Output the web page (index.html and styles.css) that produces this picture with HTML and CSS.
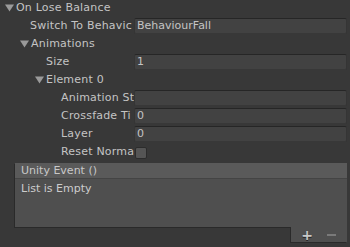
FILE: index.html
```html
<!DOCTYPE html>
<html>
<head>
<meta charset="utf-8">
<link rel="stylesheet" href="styles.css">
</head>
<body>
<div class="inspector">
  <div class="row">
    <div class="label fold lv0"><svg class="tri" width="9" height="8" viewBox="0 0 9 8"><path d="M0 0.5 H9 L4.5 7.5 Z"/></svg>On Lose Balance</div>
  </div>
  <div class="row">
    <div class="label lv1">Switch To Behavic</div>
    <div class="field">BehaviourFall</div>
  </div>
  <div class="row">
    <div class="label fold lv1f"><svg class="tri" width="9" height="8" viewBox="0 0 9 8"><path d="M0 0.5 H9 L4.5 7.5 Z"/></svg>Animations</div>
  </div>
  <div class="row">
    <div class="label lv2">Size</div>
    <div class="field">1</div>
  </div>
  <div class="row">
    <div class="label fold lv2f"><svg class="tri" width="9" height="8" viewBox="0 0 9 8"><path d="M0 0.5 H9 L4.5 7.5 Z"/></svg>Element 0</div>
  </div>
  <div class="row">
    <div class="label lv3">Animation St</div>
    <div class="field"></div>
  </div>
  <div class="row">
    <div class="label lv3">Crossfade Ti</div>
    <div class="field">0</div>
  </div>
  <div class="row">
    <div class="label lv3">Layer</div>
    <div class="field">0</div>
  </div>
  <div class="row">
    <div class="label lv3">Reset Norma</div>
    <div class="check"></div>
  </div>
  <div class="event">
    <div class="event-head">Unity Event ()</div>
    <div class="event-body">List is Empty</div>
  </div>
  <div class="event-foot">
    <span class="btn plus">+</span>
    <span class="btn minus"><span class="bar"></span></span>
  </div>
</div>
</body>
</html>
```

FILE: styles.css
```css
html, body {
  margin: 0;
  padding: 0;
  background: #383838;
  width: 350px;
  height: 247px;
  overflow: hidden;
}

.inspector {
  font-family: "DejaVu Sans", sans-serif;
  font-size: 11px;
  color: #c4c4c4;
  display: flex;
  flex-direction: column;
  gap: 2px;
  padding-right: 3px;
}

.row {
  display: flex;
  height: 16px;
  align-items: center;
}

.label {
  flex: none;
  width: 134px;
  box-sizing: border-box;
  white-space: nowrap;
  overflow: hidden;
  line-height: 16px;
  height: 16px;
  display: flex;
  align-items: center;
  letter-spacing: 0.2px;
}

.tri {
  flex: none;
  fill: #9a9a9a;
  margin-right: 2px;
}

.lv0 { padding-left: 5px; }
.lv1f { padding-left: 20px; }
.lv2f { padding-left: 35px; }
.lv1 { padding-left: 30px; }
.lv2 { padding-left: 46px; }
.lv3 { padding-left: 61px; }

.field {
  flex: 1;
  height: 16px;
  box-sizing: border-box;
  background: #424242;
  border: 1px solid #353535;
  border-top-color: #262626;
  border-bottom-color: #383838;
  border-radius: 2px;
  padding-left: 2px;
  line-height: 14px;
  color: #c4c4c4;
  white-space: nowrap;
  overflow: hidden;
}

.check {
  width: 12px;
  height: 12px;
  box-sizing: border-box;
  margin-left: 1px;
  margin-top: 2px;
  background: #555555;
  border: 1px solid #2c2c2c;
  border-radius: 2px;
}

.event {
  margin-top: 1px;
  margin-left: 15px;
  box-shadow: -1px 1px 0 #2a2a2a;
}

.event-head {
  height: 16px;
  box-sizing: border-box;
  background: #5a5a5a;
  border-bottom: 1px solid #444444;
  padding-left: 6px;
  line-height: 15px;
  color: #c8c8c8;
}

.event-body {
  height: 48px;
  box-sizing: border-box;
  background: #4f4f4f;
  padding-left: 6px;
  padding-top: 2px;
  line-height: 15px;
  color: #cccccc;
}

.event-foot {
  margin-top: -2px;
  align-self: flex-end;
  width: 56px;
  height: 15px;
  background: #4f4f4f;
  box-shadow: -1px 1px 0 #2a2a2a;
  display: flex;
  align-items: center;
  gap: 12px;
  padding-left: 10px;
  box-sizing: border-box;
}

.btn {
  width: 12px;
  display: flex;
  justify-content: center;
  align-items: center;
}

.plus {
  font-family: "DejaVu Sans", sans-serif;
  font-size: 14px;
  font-weight: bold;
  color: #c8c8c8;
  line-height: 12px;
  text-shadow: 0 1px 0 #222;
}

.minus .bar {
  width: 9px;
  height: 2px;
  background: #7a7a7a;
}
```
